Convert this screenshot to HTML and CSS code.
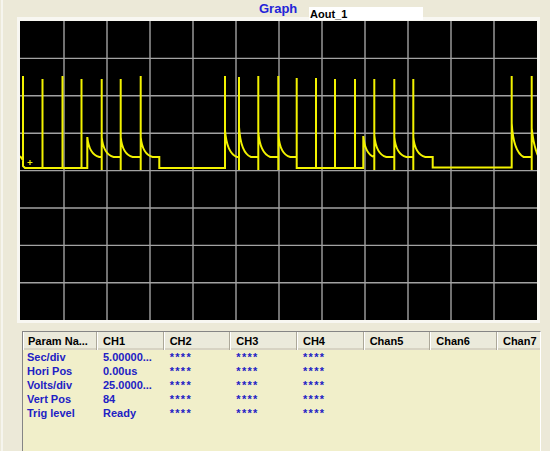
FILE: index.html
```html
<!DOCTYPE html>
<html lang="en">
<head>
    <meta charset="UTF-8">
    <meta name="viewport" content="width=device-width, initial-scale=1.0">
    <title>Graph - Aout_1</title>
    <link rel="stylesheet" href="styles.css">
</head>
<body>
    <div class="panel">
        <div class="graph-title">
            <span class="graph-label">Graph</span>
            <div class="graph-name">Aout_1</div>
        </div>

        <div class="scope-frame">
            <svg class="scope" viewBox="20 21 517 299" width="517" height="299">
                <g class="grid">
                    <line x1="64" y1="21" x2="64" y2="320"/>
                    <line x1="107" y1="21" x2="107" y2="320"/>
                    <line x1="150" y1="21" x2="150" y2="320"/>
                    <line x1="193" y1="21" x2="193" y2="320"/>
                    <line x1="236" y1="21" x2="236" y2="320"/>
                    <line x1="279" y1="21" x2="279" y2="320"/>
                    <line x1="322" y1="21" x2="322" y2="320"/>
                    <line x1="365" y1="21" x2="365" y2="320"/>
                    <line x1="408" y1="21" x2="408" y2="320"/>
                    <line x1="451" y1="21" x2="451" y2="320"/>
                    <line x1="494" y1="21" x2="494" y2="320"/>
                    <line x1="20" y1="58.4" x2="537" y2="58.4"/>
                    <line x1="20" y1="95.8" x2="537" y2="95.8"/>
                    <line x1="20" y1="133.2" x2="537" y2="133.2"/>
                    <line x1="20" y1="170.6" x2="537" y2="170.6"/>
                    <line x1="20" y1="208" x2="537" y2="208"/>
                    <line x1="20" y1="245.4" x2="537" y2="245.4"/>
                    <line x1="20" y1="282.8" x2="537" y2="282.8"/>
                </g>
                <!-- channel 1 trace -->
                <path class="trace" d="M20 156 L23 160 V76 V166 L25 168 H42.5 V79 V168 H62.5 V76 V168 H81.5 V79 V168
                    H87.3 V137 c1 10 4 18 12 20
                    H101.7 V170 V79 V137 c1 10 4 18 12 20
                    H120.7 V170 V79 V137 c1 10 4 18 12 20
                    H140.7 V170 V76 V137 c1 10 4 18 12 20
                    H159.3 V168 H225 V76 V130 c1 13 4 24 12 27
                    H239 V170 V77 V127 c1 15 4 27 12 30
                    H258.3 V170 V76 V132 c1 12 4 22 12 25
                    H278.3 V170 V76 V135 c1 11 4 20 12 22
                    H296.7 V78 V168 H316 V78 V168 H335 V79 V168 H355 V79 V168
                    H363.3 V136 c1 10 4 19 11 21
                    H374.3 V170 V79 V135 c1 11 4 20 12 22
                    H394.3 V170 V79 V137 c1 10 4 18 12 20
                    H413.3 V170 V79 V137 c1 10 4 18 12 20
                    H432.7 V167.5 H511.7 V76 V123 c1 17 4 30 12 34
                    H531.7 V170 V76 V128 c1 10 3 20 6 27 H537"/>
                <path class="trace marker" d="M27.5 162.5 h5 M30 160 v5"/>
            </svg>
        </div>

        <div class="param-table">
            <div class="param-head">
                <div class="col col-name">Param Na...</div>
                <div class="col">CH1</div>
                <div class="col">CH2</div>
                <div class="col">CH3</div>
                <div class="col">CH4</div>
                <div class="col">Chan5</div>
                <div class="col">Chan6</div>
                <div class="col">Chan7</div>
            </div>
            <div class="param-row">
                <div class="col col-name">Sec/div</div>
                <div class="col">5.00000...</div>
                <div class="col mask">****</div>
                <div class="col mask">****</div>
                <div class="col mask">****</div>
            </div>
            <div class="param-row">
                <div class="col col-name">Hori Pos</div>
                <div class="col">0.00us</div>
                <div class="col mask">****</div>
                <div class="col mask">****</div>
                <div class="col mask">****</div>
            </div>
            <div class="param-row">
                <div class="col col-name">Volts/div</div>
                <div class="col">25.0000...</div>
                <div class="col mask">****</div>
                <div class="col mask">****</div>
                <div class="col mask">****</div>
            </div>
            <div class="param-row">
                <div class="col col-name">Vert Pos</div>
                <div class="col">84</div>
                <div class="col mask">****</div>
                <div class="col mask">****</div>
                <div class="col mask">****</div>
            </div>
            <div class="param-row">
                <div class="col col-name">Trig level</div>
                <div class="col">Ready</div>
                <div class="col mask">****</div>
                <div class="col mask">****</div>
                <div class="col mask">****</div>
            </div>
        </div>
    </div>
</body>
</html>
```

FILE: styles.css
```css
html, body {
    margin: 0;
    height: 451px;
    overflow: hidden;
}

body {
    font-family: 'Liberation Sans', Arial, sans-serif;
    background-color: #ece9d8;
}

.panel {
    width: 547px;
    height: 451px;
    margin-left: 1px;
    border-left: 2px solid #f6f5ee;
    overflow: hidden;
}

/* title row */
.graph-title {
    display: flex;
    align-items: flex-start;
    height: 17px;
    padding-left: 256px;
}

.graph-label {
    width: 50px;
    font-size: 13px;
    font-weight: bold;
    line-height: 18px;
    color: #2424d8;
}

.graph-name {
    width: 114px;
    height: 13px;
    margin-top: 7px;
    padding-left: 1px;
    box-sizing: border-box;
    background-color: #fff;
    font-size: 11px;
    font-weight: bold;
    line-height: 15px;
    color: #000;
    overflow: hidden;
}

/* scope display */
.scope-frame {
    width: 517px;
    height: 299px;
    margin-left: 14px;
    border-style: solid;
    border-width: 4px 3px 3px 3px;
    border-color: #f8f7f2;
    background-color: #000;
}

.scope {
    display: block;
}

.grid line {
    stroke: #a2a2a2;
    stroke-width: 1.4;
}

.trace {
    fill: none;
    stroke: #f2f200;
    stroke-width: 2;
}

.marker {
    stroke-width: 1.2;
}

/* parameter table */
.param-table {
    width: 519px;
    height: 130px;
    margin-top: 8px;
    margin-left: 19px;
    box-sizing: border-box;
    border-top: 1px solid #858585;
    border-left: 1px solid #858585;
    border-right: 1px solid #fff;
    background-color: #f1efca;
    overflow: hidden;
}

.param-head,
.param-row {
    display: flex;
    white-space: nowrap;
}

.col {
    flex: 0 0 66.67px;
    box-sizing: border-box;
    padding-left: 6px;
    overflow: hidden;
    font-size: 11px;
    font-weight: bold;
}

.col-name {
    flex-basis: 74px;
}

.param-head {
    height: 18px;
    background-color: #ebeadb;
    box-shadow: inset 0 -2px 0 #d7d3c3;
}

.param-head .col {
    line-height: 18px;
    color: #000;
    box-shadow: inset -1px 0 0 #aca899, inset 1px 0 0 #fff;
}

.param-head .col-name {
    padding-left: 5px;
}

.param-row .col {
    height: 14px;
    line-height: 14px;
    color: #2121c4;
}

.param-row .col-name {
    padding-left: 4px;
}

.mask {
    letter-spacing: 1.3px;
}
```
